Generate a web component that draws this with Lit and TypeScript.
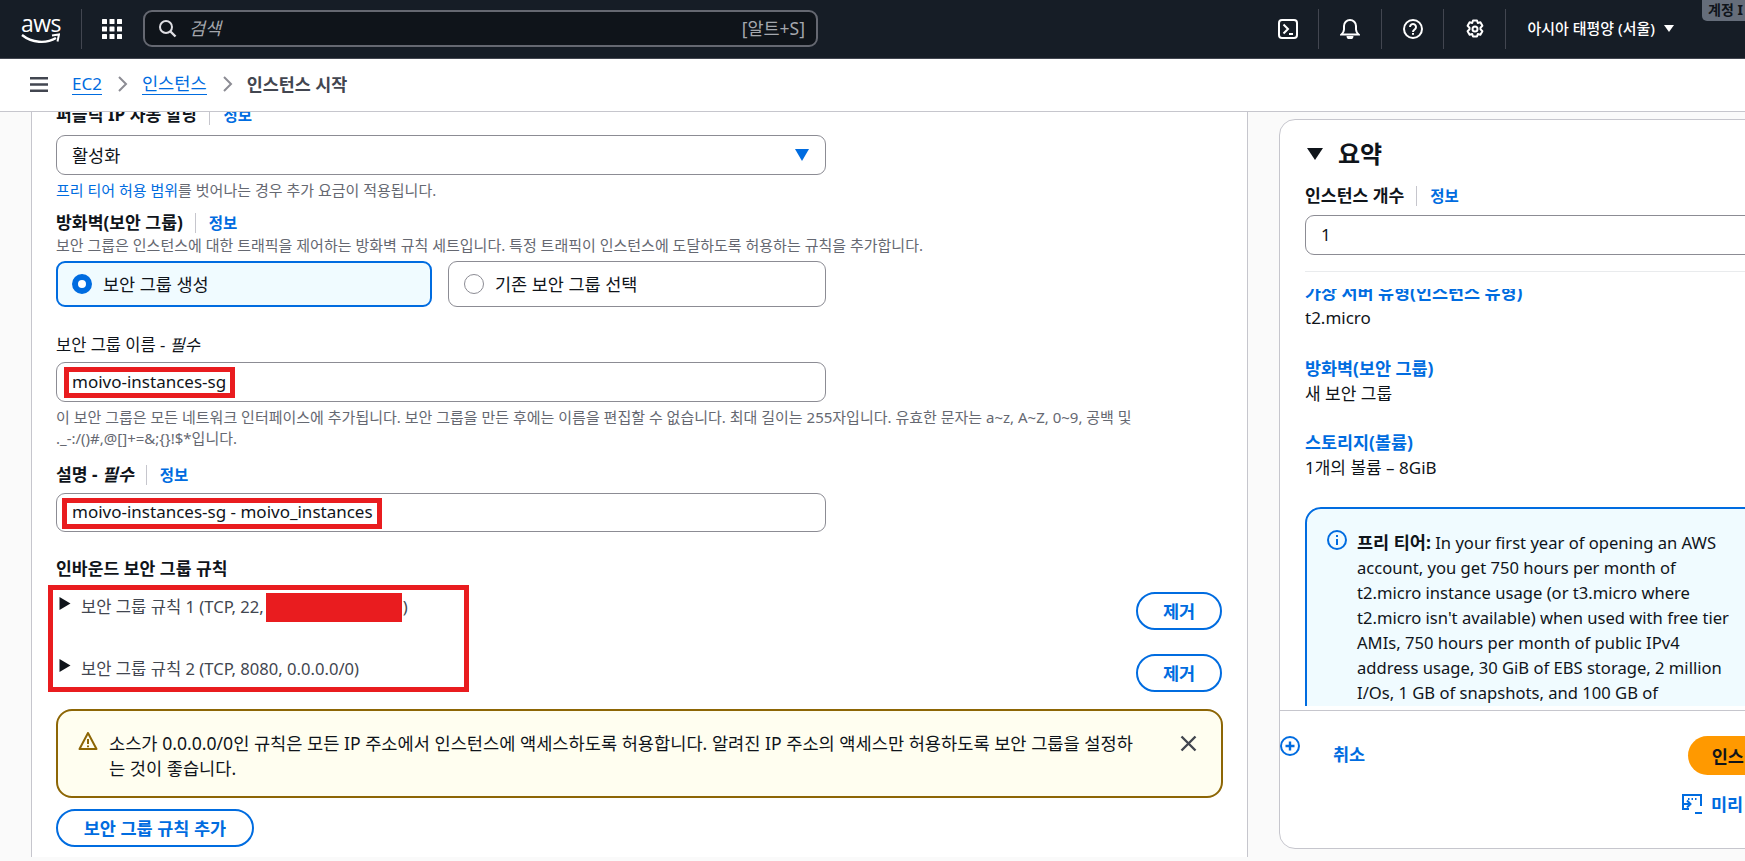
import { LitElement, html, css, svg } from "lit";
import { customElement } from "lit/decorators.js";

const caretRight = svg`<svg class="tri" viewBox="0 0 12 13"><path d="M.5 0L11.500 6.500.5 13z" fill="#0f141a"/></svg>`;

@customElement("app-root")
export class AppRoot extends LitElement {
  static styles = css`
    :host { display: block; width: 100%; height: 861px; overflow: hidden; background: #fafafa; color: #0f141a;
      font-family: "Noto Sans", "Noto Sans CJK KR", sans-serif; font-size: 15px; line-height: 20px; }
    * { box-sizing: border-box; }
    svg { display: block; flex: none; }
    a { color: #006ce0; text-decoration: none; }
    .top { height: 59px; background: #161d26; border-bottom: 1px solid #424650; display: flex; align-items: center; position: relative; color: #fff; }
    .logo { width: 61px; margin-left: 21px; height: 40px; border-right: 1px solid #424650; position: relative; display: flex; flex-direction: column; }
    .logo span { font-family: "Open Sans", sans-serif; font-size: 23px; line-height: 24px; letter-spacing: -0.6px; margin-top: 2px; font-weight: 500; }
    .logo svg { margin-top: -2px; }
    .apps { margin-left: 20px; }
    .search { margin: -1px 0 0 21px; width: 675px; height: 37px; border: 2px solid #656871; border-radius: 9px; background: #0f141a; display: flex; align-items: center; padding: 0 11px 2px 13px; color: #8c8c94; }
    .search svg { margin-top: 2px; }
    .search em { margin-left: 12px; font-size: 17.5px; color: #a4a7ad; }
    .search b { margin-left: auto; font-weight: 400; font-size: 17.5px; color: #a4a7ad; }
    .tools { margin-left: auto; display: flex; align-items: center; padding-right: 71px; }
    .tool { height: 40px; display: flex; align-items: center; justify-content: center; border-right: 1px solid #424650; width: 62px; }
    .tool.first { width: 61px; }
    .tool.wide { width: 63px; }
    .region { padding: 0 0 2px 21px; display: flex; align-items: center; gap: 9px; font-size: 15px; font-weight: 500; white-space: nowrap; }
    .tip { position: absolute; right: 0; top: 0; width: 43px; height: 21px; background: #656d7a; border-radius: 0 0 0 5px; color: #0f141a; font-size: 14px; font-weight: 700; padding-left: 6px; line-height: 20px; white-space: nowrap; overflow: hidden; }

    .crumbs { height: 53px; background: #fff; border-bottom: 1px solid #c6c6cd; display: flex; align-items: center; padding: 0 0 2px 30px; font-size: 17.6px; }
    .crumbs a { border-bottom: 1px solid #006ce0; line-height: 21px; }
    .crumbs .ec2 { margin-left: 24px; font-size: 17px; }
    .chev { margin: 0 14px 0 15px; }
    .crumbs b { font-weight: 700; color: #424650; font-size: 17.4px; }

    .body { display: flex; height: 745px; }
    .form { margin-left: 31px; width: 1217px; flex: none; background: #fff; border-left: 1px solid #c6c6cd; border-right: 1px solid #c6c6cd; padding: 0 24px 0 24px; overflow: hidden; }
    .inner { margin-top: -7px; }
    .label { display: flex; align-items: center; height: 20px; font-weight: 700; font-size: 17.2px; white-space: nowrap; }
    .label i { font-style: italic; }
    .label.plain { font-weight: 400; color: #0f141a; font-size: 16.5px; }
    .info { margin-left: 12px; padding-left: 13px; border-left: 1px solid #c6c6cd; font-size: 15.5px; color: #006ce0; font-weight: 700; height: 20px; line-height: 20px; }
    .field { position: relative; height: 39.5px; width: 770px; border: 1px solid #8c8c94; border-radius: 9px; display: flex; align-items: center; padding-left: 15px; font-size: 17px; justify-content: space-between; background: #fff; }
    .sel { margin-top: 10px; padding-right: 16px; font-size: 17.5px; }
    .hint { font-size: 15px; color: #656871; line-height: 21px; white-space: nowrap; }
    .h1 { margin-top: 5px; }
    .lab2 { margin-top: 12px; }
    .desc { margin-top: 2px; }
    .radios { margin-top: 5px; display: flex; gap: 16px; width: 770px; }
    .radio { flex: 1; height: 46.5px; border: 1px solid #8c8c94; border-radius: 9px; display: flex; align-items: center; padding-left: 15px; gap: 11px; font-size: 17.5px; }
    .radio.on { flex: none; width: 376px; border: 2px solid #006ce0; background: #f0fbff; padding-left: 14px; }
    .dot { width: 20px; height: 20px; border-radius: 50%; border: 1px solid #8c8c94; background: #fff; }
    .on .dot { border: 6px solid #006ce0; }
    .lab3 { margin-top: 28px; }
    .mt7 { margin-top: 7px; }
    .mt8 { margin-top: 8px; }
    .lab4 { margin-top: 16px; }
    .mark { position: absolute; border: 5px solid #e91c1f; pointer-events: none; }
    .m1 { left: 7px; top: 4px; width: 171px; height: 31px; }
    .m2 { left: 5px; top: 4px; width: 320px; height: 31px; }
    .m3 { left: -8px; top: -7px; width: 421px; height: 107px; }
    .lab5 { margin-top: 27px; }
    .rules { position: relative; margin-top: 13px; display: flex; flex-direction: column; gap: 24px; }
    .rule { display: flex; height: 38px; justify-content: space-between; align-items: flex-start; padding-right: 1px; }
    .rl { display: flex; align-items: center; height: 30px; font-size: 16.6px; color: #424650; white-space: nowrap; }
    .tri { width: 12px; height: 13px; margin: -8px 0 0 3px; }
    .rl > span { margin-left: 10px; }
    .red { width: 136px; height: 29px; background: #e91c1f; margin: 0 1px 0 2px; }
    .btn { height: 38px; border: 2px solid #006ce0; border-radius: 19px; display: flex; align-items: center; justify-content: center; color: #006ce0; font-weight: 700; font-size: 17.5px; background: #fff; }
    .rm { width: 86px; }
    .warn { margin-top: 17px; height: 89px; border: 2px solid #8d6605; border-radius: 16px; background: #fffef0; display: flex; padding: 20px 24px 0 20px; font-size: 17.6px; line-height: 25px; position: relative; }
    .warn p { margin: 0 0 0 11px; width: 1040px; }
    .warn .x { margin: 4px 0 0 auto; }
    .add { margin-top: 11px; width: 198px; }

    .aside { padding: 7px 0 0 31px; flex: none; }
    .card { position: relative; width: 560px; height: 730px; background: #fff; border: 1px solid #c6c6cd; border-radius: 16px; padding: 19px 0 0 25px; }
    .title { display: flex; align-items: center; height: 30px; font-size: 24px; font-weight: 700; gap: 15px; }
    .title svg { margin-left: 2px; }
    .lab6 { margin-top: 17px; }
    .cnt { margin-top: 9px; width: 510px; }
    .rule2 { margin-top: 16px; height: 1px; background: #e9ebed; width: 510px; }
    .scroll { margin-top: 17px; height: 417px; overflow: hidden; width: 510px; line-height: 25px; font-size: 17px; }
    .scin { margin-top: -9px; }
    .grp { margin-bottom: 24px; }
    .grp.g1 { margin-bottom: 26px; }
    .grp a { display: block; font-weight: 700; font-size: 17.4px; }
    .box { margin-top: 27px; border: 2px solid #006ce0; border-radius: 16px; background: #f0fbff; padding: 21.5px 20px 40px 20px; display: flex; gap: 10px; font-size: 16.6px; }
    .box b { font-size: 17.5px; }
    .box p { margin: 0; width: 385px; }
    .foot { position: absolute; left: 0; right: 0; top: 590px; border-top: 1px solid #c6c6cd; height: 139px; }
    .plus { position: absolute; left: 0; top: 25px; }
    .row { display: flex; padding: 25px 0 0 53px; align-items: flex-start; }
    .row a { margin-top: 7px; font-weight: 700; font-size: 17.5px; line-height: 22px; white-space: nowrap; }
    .launch { margin-left: 323px; width: 148px; height: 39px; border-radius: 20px; background: #ff9900; display: flex; align-items: center; justify-content: center; font-weight: 700; font-size: 17.5px; white-space: nowrap; }
    .prev { display: flex; padding: 19px 0 0 402px; gap: 9px; align-items: center; color: #006ce0; font-weight: 700; font-size: 17.5px; white-space: nowrap; }
  `;

  render() {
    const grid = [0, 1, 2].flatMap((r) => [0, 1, 2].map((c) => svg`<rect x=${c * 7.5} y=${r * 7.5} width="5" height="5" rx=".6" fill="#fff"/>`));
    const chev = html`<svg class="chev" width="11" height="16" viewBox="0 0 11 16"><path d="M2 1l7 7-7 7" fill="none" stroke="#8c8c94" stroke-width="2"/></svg>`;
    return html`
      <header class="top">
        <div class="logo">
          <span>aws</span>
          <svg width="39" height="12" viewBox="0 0 39 12"><path d="M1 2c10 8 24 9 34 3" fill="none" stroke="#fff" stroke-width="2.4"/><path d="M31 2.5l7-1-1.5 7" fill="none" stroke="#fff" stroke-width="2"/></svg>
        </div>
        <svg class="apps" width="20" height="20" viewBox="0 0 20 20">${grid}</svg>
        <div class="search">
          <svg width="19" height="19" viewBox="0 0 19 19"><circle cx="8" cy="8" r="6" fill="none" stroke="#dedee3" stroke-width="2"/><path d="M12.5 12.5l5 5" stroke="#dedee3" stroke-width="2.4"/></svg>
          <em>검색</em><b>[알트+S]</b>
        </div>
        <div class="tools">
          <div class="tool first"><svg width="20" height="20" viewBox="0 0 20 20" fill="none" stroke="#fff" stroke-width="2"><rect x="1" y="1" width="18" height="18" rx="3"/><path d="M5.5 5.5l4.5 4.5-4.5 4.5M11 15h4"/></svg></div>
          <div class="tool wide"><svg width="20" height="20" viewBox="0 0 20 20" fill="none" stroke="#fff" stroke-width="2"><path d="M1.5 15.5c2-2 2.5-3 2.5-5V7a6 6 0 0 1 12 0v3.500c0 2 .5 3 2.500 5z"/><path d="M7.500 17a2.500 2.500 0 0 0 5 0" fill="#fff"/></svg></div>
          <div class="tool"><svg width="20" height="20" viewBox="0 0 20 20" fill="none" stroke="#fff" stroke-width="2"><circle cx="10" cy="10" r="9"/><path d="M7 8a3 3 0 1 1 4.500 2.600c-1 .6-1.500 1-1.500 2.400"/><path d="M10 14v1.800"/></svg></div>
          <div class="tool"><svg width="20" height="20" viewBox="0 0 20 20" fill="none" stroke="#fff" stroke-width="2"><path d="M8 1.500h4l.8 2.500 2.600-.7 2 3.500-1.900 1.900v1.600l1.900 1.900-2 3.500-2.600-.7-.8 2.500H8l-.8-2.500-2.600.7-2-3.500 1.900-1.900V8.700L2.600 6.800l2-3.500 2.600.7z" stroke-linejoin="round"/><circle cx="10" cy="10" r="2.500"/></svg></div>
          <div class="region">아시아 태평양 (서울)
            <svg width="10" height="7" viewBox="0 0 10 7"><path d="M0 0h10L5 7z" fill="#fff"/></svg>
          </div>
        </div>
        <div class="tip">계정 I</div>
      </header>

      <nav class="crumbs">
        <svg width="18" height="15" viewBox="0 0 18 15"><path d="M0 1.200h18M0 7.500h18M0 13.800h18" stroke="#424650" stroke-width="2.400"/></svg>
        <a class="ec2">EC2</a>${chev}<a>인스턴스</a>${chev}<b>인스턴스 시작</b>
      </nav>

      <div class="body">
        <main class="form"><div class="inner">
          <div class="label">퍼블릭 IP 자동 할당<span class="info">정보</span></div>
          <div class="field sel">활성화<svg width="14" height="12" viewBox="0 0 14 12"><path d="M0 0h14L7 12z" fill="#006ce0"/></svg></div>
          <div class="hint h1"><a>프리 티어 허용 범위</a>를 벗어나는 경우 추가 요금이 적용됩니다.</div>
          <div class="label lab2">방화벽(보안 그룹)<span class="info">정보</span></div>
          <div class="hint desc">보안 그룹은 인스턴스에 대한 트래픽을 제어하는 방화벽 규칙 세트입니다. 특정 트래픽이 인스턴스에 도달하도록 허용하는 규칙을 추가합니다.</div>
          <div class="radios">
            <div class="radio on"><span class="dot"></span>보안 그룹 생성</div>
            <div class="radio"><span class="dot"></span>기존 보안 그룹 선택</div>
          </div>
          <div class="label plain lab3">보안 그룹 이름 -&nbsp;<i>필수</i></div>
          <div class="field mt7">moivo-instances-sg<span class="mark m1"></span></div>
          <div class="hint h1">이 보안 그룹은 모든 네트워크 인터페이스에 추가됩니다. 보안 그룹을 만든 후에는 이름을 편집할 수 없습니다. 최대 길이는 255자입니다. 유효한 문자는 a~z, A~Z, 0~9, 공백 및<br>._-:/()#,@[]+=&amp;;{}!$*입니다.</div>
          <div class="label lab4">설명 -&nbsp;<i>필수</i><span class="info">정보</span></div>
          <div class="field mt8">moivo-instances-sg - moivo_instances<span class="mark m2"></span></div>
          <div class="label lab5">인바운드 보안 그룹 규칙</div>
          <div class="rules">
            <div class="rule">
              <div class="rl">${caretRight}<span>보안 그룹 규칙 1 (TCP, 22,</span><div class="red"></div>)</div>
              <div class="btn rm">제거</div>
            </div>
            <div class="rule">
              <div class="rl">${caretRight}<span>보안 그룹 규칙 2 (TCP, 8080, 0.0.0.0/0)</span></div>
              <div class="btn rm">제거</div>
            </div>
            <span class="mark m3"></span>
          </div>
          <div class="warn">
            <svg width="20" height="20" viewBox="0 0 20 20" fill="none" stroke="#8d6605" stroke-width="2"><path d="M10 2L1.500 18h17z" stroke-linejoin="round"/><path d="M10 8v5M10 14.500v1.800"/></svg>
            <p>소스가 0.0.0.0/0인 규칙은 모든 IP 주소에서 인스턴스에 액세스하도록 허용합니다. 알려진 IP 주소의 액세스만 허용하도록 보안 그룹을 설정하<br>는 것이 좋습니다.</p>
            <svg class="x" width="17" height="17" viewBox="0 0 17 17"><path d="M1.500 1.500l14 14M15.500 1.500l-14 14" stroke="#424650" stroke-width="2.400"/></svg>
          </div>
          <div class="btn add">보안 그룹 규칙 추가</div>
        </div></main>

        <aside class="aside"><section class="card">
          <div class="title"><svg width="16" height="12" viewBox="0 0 16 12"><path d="M0 0h16L8 12z" fill="#0f141a"/></svg>요약</div>
          <div class="label lab6">인스턴스 개수<span class="info">정보</span></div>
          <div class="field cnt">1</div>
          <div class="rule2"></div>
          <div class="scroll"><div class="scin">
            <div class="grp g1"><a>가상 서버 유형(인스턴스 유형)</a>t2.micro</div>
            <div class="grp"><a>방화벽(보안 그룹)</a>새 보안 그룹</div>
            <div class="grp"><a>스토리지(볼륨)</a>1개의 볼륨 – 8GiB</div>
            <div class="box">
              <svg width="20" height="20" viewBox="0 0 20 20" fill="none" stroke="#006ce0" stroke-width="2"><circle cx="10" cy="10" r="9"/><path d="M10 9v6M10 5v2"/></svg>
              <p><b>프리 티어:</b> In your first year of opening an AWS account, you get 750 hours per month of t2.micro instance usage (or t3.micro where t2.micro isn't available) when used with free tier AMIs, 750 hours per month of public IPv4 address usage, 30 GiB of EBS storage, 2 million I/Os, 1 GB of snapshots, and 100 GB of bandwidth to the internet.</p>
            </div>
          </div></div>
          <div class="foot">
            <svg class="plus" width="20" height="20" viewBox="0 0 20 20" fill="none" stroke="#006ce0" stroke-width="2"><circle cx="10" cy="10" r="9"/><path d="M5.500 10h9M10 5.500v9" stroke-width="2.400"/></svg>
            <div class="row"><a>취소</a><div class="launch">인스턴스 시작</div></div>
            <div class="prev">
              <svg width="20" height="20" viewBox="0 0 20 20" fill="none" stroke="#006ce0" stroke-width="2"><path d="M7 15H1V1h18v11"/><path d="M1 10h6M5 6.500l3.500 3.500L5 13.500"/><path d="M13 19h7"/><path d="M6 5h1.500M9.500 5H11M13 5h1.500"/></svg>
              미리 보기 코드
            </div>
          </div>
        </section></aside>
      </div>
    `;
  }
}
